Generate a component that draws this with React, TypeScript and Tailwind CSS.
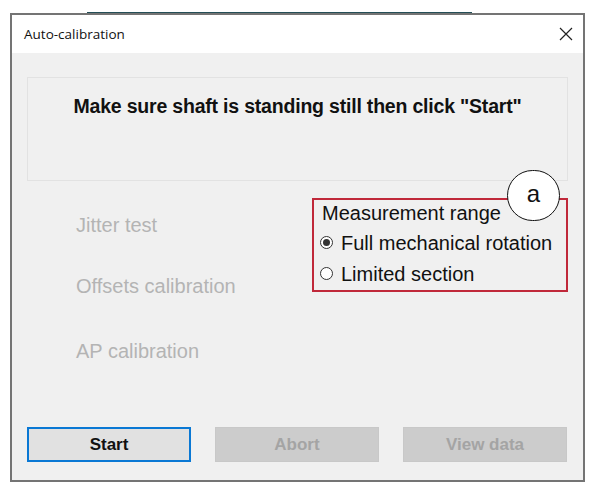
function RadioDot({ checked }: { checked?: boolean }) {
  return (
    <span className="w-[13px] h-[13px] rounded-full border border-[#333] bg-white flex items-center justify-center shrink-0">
      {checked && <span className="w-[7px] h-[7px] rounded-full bg-[#333]" />}
    </span>
  );
}

export default function App() {
  return (
    <div className="relative w-[595px] h-[488px] bg-white overflow-hidden font-['Liberation_Sans',sans-serif]">
      {/* window behind, peeking out on top */}
      <div className="absolute left-[87px] top-[12px] w-[385px] h-[3px] bg-[#244e57]" />

      <div className="relative ml-[10px] mt-[13px] w-[575px] h-[469px] border-2 border-[#747474] flex flex-col">
        <div className="h-[38px] bg-white flex items-center justify-between pl-[12px] pr-[9px]">
          <span className="text-[13.5px] text-[#111] font-['Open_Sans',sans-serif]">Auto-calibration</span>
          <svg width="16" height="16" viewBox="0 0 16 16" className="text-[#222]">
            <path d="M2 2 L14 14 M14 2 L2 14" stroke="currentColor" strokeWidth="1.2" fill="none" />
          </svg>
        </div>

        <div className="flex-1 bg-[#f0f0f0] flex flex-col px-[15px] pt-[24px]">
          <div className="h-[104px] border border-[#e2e2e2] flex justify-center pt-[14px]">
            <p className="text-[19.5px] font-bold text-[#111] tracking-[-0.2px]">
              Make sure shaft is standing still then click "Start"
            </p>
          </div>

          <div className="flex mt-[17px]">
            <div className="w-[286px] flex flex-col pl-[49px] pt-[14px] text-[20px] text-[#b4b4b4]">
              <span className="h-[26px] leading-[26px]">Jitter test</span>
              <span className="h-[26px] leading-[26px] mt-[35px]">Offsets calibration</span>
              <span className="h-[26px] leading-[26px] mt-[39px]">AP calibration</span>
            </div>

            <div className="relative">
              <div className="w-[256px] h-[94px] border-2 border-[#c0283a] flex flex-col pl-[6px] text-[20px] text-[#111]">
                <span className="leading-[26px] h-[27px] pl-[2px]">Measurement range</span>
                <div className="flex items-center gap-[8px] h-[31px]">
                  <RadioDot checked />
                  <span>Full mechanical rotation</span>
                </div>
                <div className="flex items-center gap-[8px] h-[31px]">
                  <RadioDot />
                  <span>Limited section</span>
                </div>
              </div>
              <div className="absolute left-[195px] top-[-28px] w-[53px] h-[51px] rounded-full border-[1.5px] border-[#111] bg-white flex items-center justify-center text-[24px] text-[#111] pb-[3px]">
                a
              </div>
            </div>
          </div>

          <div className="mt-auto mb-[18px] flex gap-[24px]">
            <button className="w-[164px] h-[35px] border-2 border-[#0a78d4] bg-[#e1e1e1] text-[17px] font-bold text-[#111]">
              Start
            </button>
            <button className="w-[164px] h-[35px] border border-[#c8c8c8] bg-[#cccccc] text-[17px] font-bold text-[#a4a4a4]">
              Abort
            </button>
            <button className="w-[164px] h-[35px] border border-[#c8c8c8] bg-[#cccccc] text-[17px] font-bold text-[#a4a4a4]">
              View data
            </button>
          </div>
        </div>
      </div>
    </div>
  );
}
